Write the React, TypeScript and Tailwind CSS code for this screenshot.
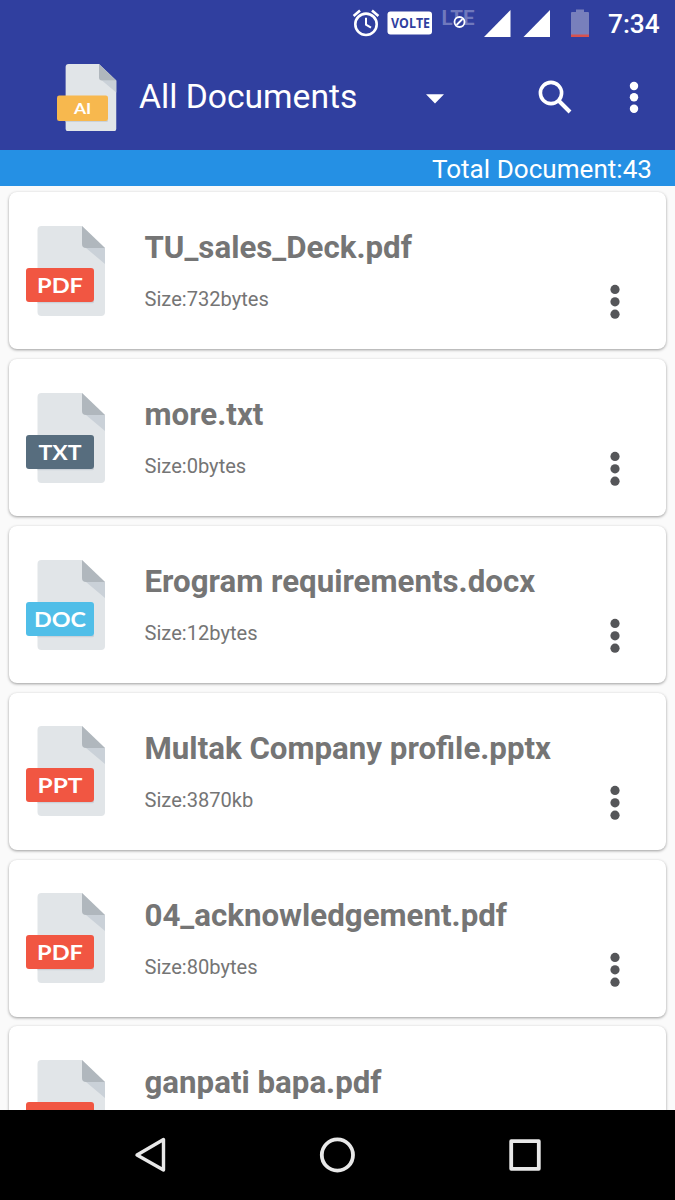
import React from "react";

type Kind = { label: string; color: string; textWidth: number };

const KINDS: Record<string, Kind> = {
  pdf: { label: "PDF", color: "#f15642", textWidth: 46 },
  txt: { label: "TXT", color: "#576d7e", textWidth: 43 },
  doc: { label: "DOC", color: "#50bee8", textWidth: 52 },
  ppt: { label: "PPT", color: "#f15642", textWidth: 45 },
  ai: { label: "AI", color: "#f7b84e", textWidth: 23 },
};

const FILES = [
  { name: "TU_sales_Deck.pdf", size: "732bytes", kind: "pdf" },
  { name: "more.txt", size: "0bytes", kind: "txt" },
  { name: "Erogram requirements.docx", size: "12bytes", kind: "doc" },
  { name: "Multak Company profile.pptx", size: "3870kb", kind: "ppt" },
  { name: "04_acknowledgement.pdf", size: "80bytes", kind: "pdf" },
];

function FileIcon({ kind, className, labelHidden }: { kind: string; className: string; labelHidden?: boolean }) {
  const { label, color, textWidth } = KINDS[kind];
  return (
    <svg viewBox="0 0 80 90" className={className}>
      <path d="M15.5 0H56L79 22V86Q79 90 75 90H15.5Q11.5 90 11.5 86V4Q11.5 0 15.5 0Z" fill="#e1e5e8" />
      <path d="M60 22H79V38Z" fill="#cad1d8" />
      <path d="M56 0L79 22H60Q56 22 56 18Z" fill="#b0b7bd" />
      <path d="M11.5 75H68V76Q68 77.3 66 77.3H11.5Z" fill="#cad1d8" />
      <rect x="0" y="42" width="68" height="34" rx="3" fill={color} />
      {!labelHidden && (
        <text
          x="34"
          y="66.6"
          textAnchor="middle"
          textLength={textWidth}
          lengthAdjust="spacingAndGlyphs"
          fill="#fff"
          className="font-['Lato'] text-[21px] font-bold"
        >
          {label}
        </text>
      )}
    </svg>
  );
}

function Dots({ className }: { className: string }) {
  return (
    <svg viewBox="0 0 10 36" className={className} fill="currentColor">
      <circle cx="5" cy="5.4" r="4.6" />
      <circle cx="5" cy="17.8" r="4.6" />
      <circle cx="5" cy="30.2" r="4.6" />
    </svg>
  );
}

function StatusBar() {
  return (
    <div className="flex h-[45px] items-center pl-[352px] text-white">
      <svg viewBox="0 0 28 28" className="h-7 w-7" fill="none" stroke="#fff">
        <circle cx="14" cy="15.3" r="10.7" strokeWidth="2.6" />
        <path d="M14 8.8V15.6L19 18.6" strokeWidth="2" />
        <path d="M1.6 7L8 1.6M26.4 7L20 1.6" strokeWidth="2.6" />
      </svg>
      <svg viewBox="0 0 46 24" className="ml-[7px] h-6 w-[46px] overflow-visible">
        <rect x="0.5" y="0.5" width="44.5" height="23" rx="3" fill="#fff" />
        <text x="4" y="16.5" textLength="39" lengthAdjust="spacingAndGlyphs" fill="#303f9f" className="font-['Open_Sans'] text-[14px] font-bold">
          VOLTE
        </text>
      </svg>
      <svg viewBox="0 0 34 28" className="ml-[9px] h-7 w-[34px] overflow-visible">
        <text x="-0.5" y="15.8" textLength="33" lengthAdjust="spacingAndGlyphs" fill="#7079bd" className="font-['Roboto'] text-[20.5px] font-bold">
          LTE
        </text>
        <circle cx="17.5" cy="13" r="5" fill="#303f9f" stroke="#fff" strokeWidth="1.8" />
        <path d="M14.5 16L20.5 10" stroke="#fff" strokeWidth="1.8" />
      </svg>
      <svg viewBox="0 0 68 28" className="ml-[8px] h-7 w-[68px]" fill="#fff">
        <path d="M0 28L26.5 1V28Z" />
        <path d="M39.5 28L66 1V28Z" />
      </svg>
      <svg viewBox="0 0 18 28" className="ml-[19px] h-7 w-[18px]">
        <path d="M5 0.5H13V3H17Q18 3 18 4V28H0V4Q0 3 1 3H5Z" fill="#7880bc" />
        <path d="M0 25.5H18V28H0Z" fill="#d6524f" />
      </svg>
      <span className="ml-[19px] mt-[3px] text-[26.25px] font-medium leading-none">7:34</span>
    </div>
  );
}

function Toolbar() {
  return (
    <div className="flex h-[105px] items-center pl-[56.5px] text-white">
      <FileIcon kind="ai" className="h-[67.5px] w-[60px]" />
      <span className="-mt-[2px] ml-[22.5px] w-[218px] whitespace-nowrap text-[33.65px] leading-none">All Documents</span>
      <svg viewBox="0 0 18 10" className="ml-[68.5px] mt-[2px] h-[10px] w-[18px]" fill="#fff">
        <path d="M0 0.3H18L9 9.5Z" />
      </svg>
      <svg viewBox="0 0 34 34" className="ml-[94.5px] -mt-px h-[34px] w-[34px]" fill="none" stroke="#fff">
        <circle cx="13" cy="13" r="10.6" strokeWidth="3.6" />
        <path d="M20.5 20.5L32 32" strokeWidth="4" />
      </svg>
      <Dots className="ml-[57px] h-[33px] w-[10px]" />
    </div>
  );
}

const CARD = "flex shrink-0 bg-white pl-[17px] text-[#757575] shadow-[0_1px_3px_rgba(0,0,0,0.38)]";

function FileCard({ name, size, kind }: { name: string; size: string; kind: string }) {
  return (
    <div className={`${CARD} h-[157px] rounded-[8px]`}>
      <FileIcon kind={kind} className="mt-[33.8px] h-[90px] w-20" />
      <div className="ml-[38.5px] flex w-[450px] flex-col pt-[37px]">
        <span className="whitespace-nowrap text-[31.25px] font-bold leading-[38px]">{name}</span>
        <span className="mt-[20px] text-[20.1px] leading-6">Size:{size}</span>
      </div>
      <Dots className="ml-[15.5px] mt-[92px] h-9 w-[10px] text-[#555659]" />
    </div>
  );
}

export default function App() {
  return (
    <div className="flex h-[1200px] w-[675px] flex-col overflow-hidden bg-[#fafafa] font-['Roboto',sans-serif]">
      <header className="bg-[#303f9f]">
        <StatusBar />
        <Toolbar />
      </header>
      <div className="flex h-[36px] shrink-0 items-center justify-end bg-[#2590e4] pr-[23px] pt-[2px] text-[26.1px] leading-none text-white">
        Total Document:43
      </div>
      <main className="flex min-h-0 flex-1 flex-col gap-[9.875px] overflow-hidden px-[9px] pt-[6px]">
        {FILES.map((file) => (
          <FileCard key={file.name} {...file} />
        ))}
        <div className={`${CARD} h-[90px] rounded-t-[8px]`}>
          <FileIcon kind="pdf" labelHidden className="mt-[33.8px] h-[90px] w-20 shrink-0" />
          <span className="ml-[38.5px] mt-[37.5px] whitespace-nowrap text-[31.25px] font-bold leading-[38px]">ganpati bapa.pdf</span>
        </div>
      </main>
      <nav className="flex h-[90px] shrink-0 items-center bg-black pl-[134px]">
        <svg viewBox="0 0 32 36" className="h-9 w-8" fill="none" stroke="#e8e8e8" strokeWidth="3.4" strokeLinejoin="round">
          <path d="M29.5 2.5V33L3 18Z" />
        </svg>
        <svg viewBox="0 0 36 36" className="ml-[153px] h-9 w-9" fill="none" stroke="#e8e8e8" strokeWidth="3.8">
          <circle cx="18.4" cy="18" r="15.6" />
        </svg>
        <svg viewBox="0 0 32 32" className="ml-[154px] h-8 w-8" fill="none" stroke="#e8e8e8" strokeWidth="3.8" strokeLinejoin="round">
          <path d="M2.2 2.2H29.8V29.8H2.2Z" />
        </svg>
      </nav>
    </div>
  );
}
